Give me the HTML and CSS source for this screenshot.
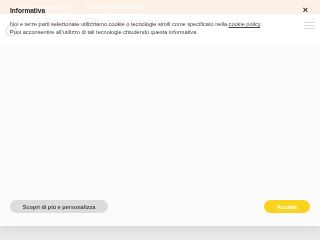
FILE: index.html
```html
<!DOCTYPE html>
<html lang="it">
<head>
    <meta charset="UTF-8">
    <meta name="viewport" content="width=device-width, initial-scale=1.0">
    <title>Studio Effervescenza</title>
    <link rel="stylesheet" href="styles.css">
</head>
<body>
    <!-- Page behind the banner -->
    <div class="topbar">
        <span class="topbar-mail">info@effervescenza.com</span>
        <span class="topbar-cta">RICHIEDI PREVENTIVO</span>
    </div>
    <header class="site-header">
        <div class="logo">
            <svg width="12" height="12" viewBox="0 0 12 12">
                <circle cx="6" cy="6" r="5" fill="none" stroke="#8a8a8a" stroke-width="1.4"/>
                <circle cx="6" cy="6" r="1.8" fill="#8a8a8a"/>
            </svg>
            <span class="brand">| Studio Effervescenza</span>
        </div>
        <div class="burger"><span></span><span></span><span></span></div>
    </header>

    <!-- Cookie banner -->
    <div class="cookie-banner">
        <div class="cookie-head">
            <div class="cookie-title">Informativa</div>
            <div class="cookie-close">&times;</div>
        </div>
        <p class="cookie-text">Noi e terze parti selezionate utilizziamo cookie o tecnologie simili come specificato nella <a href="#">cookie policy</a>.<br>Puoi acconsentire all’utilizzo di tali tecnologie chiudendo questa informativa.</p>
        <div class="cookie-actions">
            <button class="btn btn-more">Scopri di più e personalizza</button>
            <button class="btn btn-accept">Accetta</button>
        </div>
    </div>
</body>
</html>
```

FILE: styles.css
```css
/* Page */
body {
    margin: 0;
    font-family: "Liberation Sans", Arial, sans-serif;
    background-color: #ebebec;
    height: 240px;
    overflow: hidden;
}

.topbar {
    height: 14px;
    background-color: #f3bc92;
    color: #fff;
    font-size: 5px;
    display: flex;
    align-items: center;
    gap: 16px;
    padding-left: 15px;
}

.site-header {
    background-color: #fff;
    height: 30px;
    display: flex;
    justify-content: space-between;
    align-items: flex-start;
    padding: 0 5px;
}

.logo {
    display: flex;
    align-items: flex-start;
    gap: 20px;
}
.logo svg {
    margin-top: 11px;
}
.brand {
    font-size: 13px;
    color: #f0b48a;
    margin-top: 1px;
}

.burger {
    display: flex;
    flex-direction: column;
    gap: 2px;
    margin-top: 8px;
}
.burger span {
    display: block;
    width: 11px;
    height: 1px;
    background-color: #555;
}

/* Cookie banner */
.cookie-banner {
    position: fixed;
    top: 0;
    left: 0;
    right: 0;
    height: 226px;
    background-color: rgba(255, 255, 255, 0.78);
    box-shadow: 0 4px 10px rgba(0, 0, 0, 0.08);
    padding: 0 10px;
    box-sizing: border-box;
    display: flex;
    flex-direction: column;
    color: #333;
}

.cookie-head {
    display: flex;
    justify-content: space-between;
    align-items: center;
    height: 20px;
}
.cookie-title {
    font-size: 6.5px;
    font-weight: bold;
    color: #222;
}
.cookie-close {
    font-size: 9px;
    font-weight: bold;
    color: #333;
    margin-right: 2px;
}

.cookie-text {
    margin: 0;
    font-size: 5.6px;
    line-height: 8px;
    color: #444;
    flex: 1;
}
.cookie-text a {
    color: #444;
}

.cookie-actions {
    display: flex;
    justify-content: space-between;
    margin-bottom: 13px;
}
.btn {
    border: none;
    height: 13px;
    border-radius: 7px;
    font-family: inherit;
    font-size: 5.5px;
    font-weight: bold;
    padding: 0;
}
.btn-more {
    width: 98px;
    background-color: #dcdcdc;
    color: #444;
}
.btn-accept {
    width: 46px;
    background-color: #f8d31f;
    color: #fff;
}
```
